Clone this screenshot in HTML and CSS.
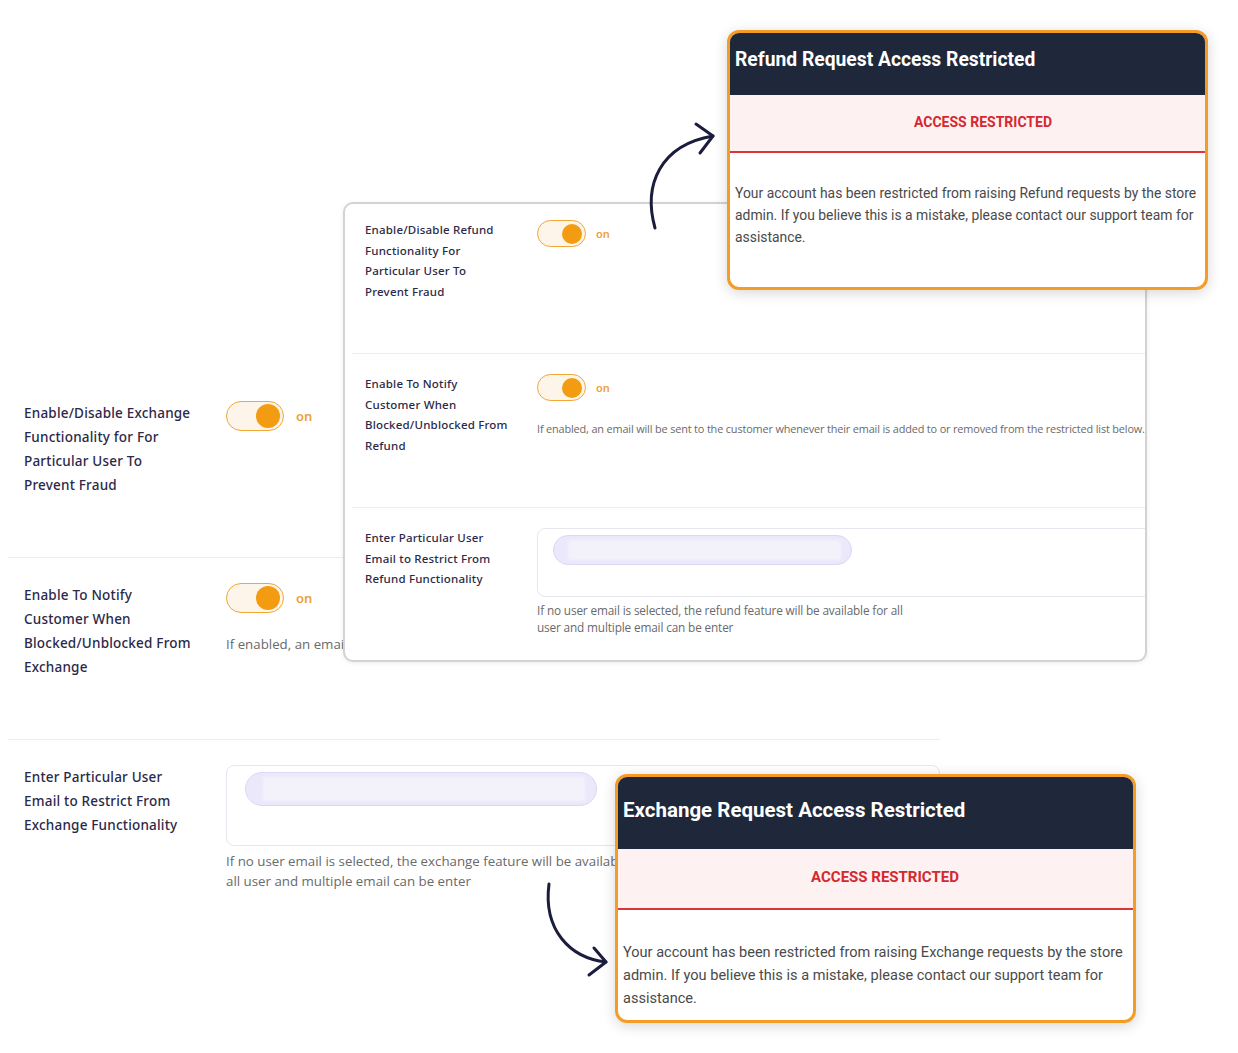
FILE: index.html
```html
<!DOCTYPE html>
<html lang="en">
<head>
<meta charset="utf-8">
<title>Restricted user settings</title>
<link rel="stylesheet" href="styles.css">
</head>
<body>
<div class="canvas">

  <!-- Exchange restriction settings -->
  <section class="settings settings--exchange">
    <div class="setting">
      <div class="setting__label">Enable/Disable Exchange<br>Functionality for For<br>Particular User To<br>Prevent Fraud</div>
      <div class="setting__control">
        <div class="switch-row">
          <span class="switch"><span class="switch__knob"></span></span>
          <span class="switch__state">on</span>
        </div>
      </div>
    </div>
    <div class="setting">
      <div class="setting__label">Enable To Notify<br>Customer When<br>Blocked/Unblocked From<br>Exchange</div>
      <div class="setting__control">
        <div class="switch-row">
          <span class="switch"><span class="switch__knob"></span></span>
          <span class="switch__state">on</span>
        </div>
        <p class="setting__hint setting__hint--single">If enabled, an email will be sent to the customer whenever their email is added to or removed from the restricted list below.</p>
      </div>
    </div>
    <div class="setting">
      <div class="setting__label">Enter Particular User<br>Email to Restrict From<br>Exchange Functionality</div>
      <div class="setting__control">
        <div class="email-box">
          <span class="email-chip"><span class="email-chip__text"></span></span>
        </div>
        <p class="setting__hint">If no user email is selected, the exchange feature will be available for<br>all user and multiple email can be enter</p>
      </div>
    </div>
  </section>

  <!-- Refund restriction settings -->
  <section class="settings settings--refund">
    <div class="setting">
      <div class="setting__label">Enable/Disable Refund<br>Functionality For<br>Particular User To<br>Prevent Fraud</div>
      <div class="setting__control">
        <div class="switch-row">
          <span class="switch"><span class="switch__knob"></span></span>
          <span class="switch__state">on</span>
        </div>
      </div>
    </div>
    <div class="setting">
      <div class="setting__label">Enable To Notify<br>Customer When<br>Blocked/Unblocked From<br>Refund</div>
      <div class="setting__control">
        <div class="switch-row">
          <span class="switch"><span class="switch__knob"></span></span>
          <span class="switch__state">on</span>
        </div>
        <p class="setting__hint setting__hint--single">If enabled, an email will be sent to the customer whenever their email is added to or removed from the restricted list below.</p>
      </div>
    </div>
    <div class="setting">
      <div class="setting__label">Enter Particular User<br>Email to Restrict From<br>Refund Functionality</div>
      <div class="setting__control">
        <div class="email-box">
          <span class="email-chip"><span class="email-chip__text"></span></span>
        </div>
        <p class="setting__hint">If no user email is selected, the refund feature will be available for all<br>user and multiple email can be enter</p>
      </div>
    </div>
  </section>

  <!-- Customer-facing notices -->
  <article class="notice notice--refund">
    <h2 class="notice__head">Refund Request Access Restricted</h2>
    <div class="notice__flag">ACCESS RESTRICTED</div>
    <p class="notice__body">Your account has been restricted from raising Refund requests by the store admin. If you believe this is a mistake, please contact our support team for assistance.</p>
  </article>

  <article class="notice notice--exchange">
    <h2 class="notice__head">Exchange Request Access Restricted</h2>
    <div class="notice__flag">ACCESS RESTRICTED</div>
    <p class="notice__body">Your account has been restricted from raising Exchange requests by the store admin. If you believe this is a mistake, please contact our support team for assistance.</p>
  </article>

  <!-- Hand-drawn pointers -->
  <svg class="pointer pointer--up" width="1238" height="1053" viewBox="0 0 1238 1053" aria-hidden="true">
    <path d="M655 228 C643 185 660 145 713 136"/>
    <path d="M696 124 L713 136 L700 153"/>
  </svg>
  <svg class="pointer pointer--down" width="1238" height="1053" viewBox="0 0 1238 1053" aria-hidden="true">
    <path d="M549 884 C543 930 570 958 606 962"/>
    <path d="M594 948 L606 962 L589 975"/>
  </svg>
</div>
</body>
</html>
```

FILE: styles.css
```css
* { box-sizing: border-box; }

body {
  margin: 0;
  background: #ffffff;
}

.canvas {
  position: relative;
  width: 1238px;
  height: 1053px;
  overflow: hidden;
  font-family: "Noto Sans", "Open Sans", sans-serif;
  color: #2c2948;
}

/* ---------- settings rows ---------- */
.settings p { margin: 0; }

.setting {
  display: flex;
  border-bottom: 1px solid #ebebf0;
}
.setting:last-child { border-bottom: 0; }

.setting__control {
  flex: 1;
  min-width: 0;
}

.switch-row {
  display: flex;
  align-items: center;
}

.switch {
  position: relative;
  display: flex;
  align-items: center;
  justify-content: flex-end;
  border: 1.5px solid #f2a633;
  background: #fdf5e9;
  border-radius: 999px;
}
.switch__knob {
  display: block;
  border-radius: 50%;
  background: #f39c12;
}
.switch__state {
  color: #eda134;
  font-weight: 600;
}

.setting__hint {
  color: #6a6a6a;
  font-family: "Open Sans", sans-serif;
}
.setting__hint--single { white-space: nowrap; }

.email-box {
  border: 1px solid #e6e6ee;
  border-radius: 8px;
  background: #fff;
}
.email-chip {
  display: block;
  background: #ece8fb;
  border: 1px solid #ddd6f6;
  border-radius: 999px;
}
.email-chip__text {
  display: block;
  height: 100%;
  background: #f3f1f9;
  filter: blur(1.5px);
}

/* exchange block: page-level flow */
.settings--exchange {
  width: 932px;
  margin: 0 0 0 8px;
  padding-top: 375px;
}
.settings--exchange .setting {
  padding: 25px 0 60px 16px;
}
.settings--exchange .setting:first-child { padding-top: 26px; }
.settings--exchange .setting__label {
  width: 202px;
  flex: none;
  font-size: 13.5px;
  line-height: 24px;
  font-weight: 500;
  letter-spacing: 0.2px;
}
.settings--exchange .switch {
  width: 58px;
  height: 30px;
  padding-right: 3px;
}
.settings--exchange .switch__knob { width: 24px; height: 24px; }
.settings--exchange .switch__state { margin-left: 12px; font-size: 13px; }
.settings--exchange .setting__hint { font-size: 13.3px; line-height: 20px; }
.settings--exchange .setting__hint--single { margin-top: 21px; }
.settings--exchange .email-box {
  height: 81px;
  padding: 6px 0 0 18px;
}
.settings--exchange .email-chip {
  width: 352px;
  height: 34px;
  padding: 4px 11px 4px 17px;
}
.settings--exchange .email-box + .setting__hint { margin-top: 5px; }

/* refund block: floating panel */
.settings--refund {
  position: absolute;
  left: 343px;
  top: 202px;
  width: 804px;
  height: 460px;
  padding-left: 7px;
  background: #fff;
  border: 2px solid #d3d3d3;
  border-radius: 10px;
  overflow: hidden;
  box-shadow: 0 1px 4px rgba(0, 0, 0, 0.08);
}
.settings--refund .setting {
  padding: 20px 0 51px 13px;
}
.settings--refund .setting:first-child { padding-top: 16px; }
.settings--refund .setting__label {
  width: 172px;
  flex: none;
  font-size: 11.5px;
  line-height: 20.5px;
  font-weight: 500;
  letter-spacing: 0.2px;
}
.settings--refund .switch {
  width: 49px;
  height: 27px;
  padding-right: 3px;
}
.settings--refund .switch__knob { width: 20px; height: 20px; }
.settings--refund .switch__state { margin-left: 10px; font-size: 11px; }
.settings--refund .setting__hint { font-size: 11.8px; line-height: 17px; letter-spacing: -0.15px; }
.settings--refund .setting__hint--single { margin-top: 19px; font-size: 10.9px; }
.settings--refund .email-box {
  width: 640px;
  height: 69px;
  padding: 6px 0 0 15px;
}
.settings--refund .email-chip {
  width: 299px;
  height: 30px;
  padding: 4px 10px 4px 14px;
}
.settings--refund .email-box + .setting__hint { margin-top: 5px; }

/* ---------- notice cards ---------- */
.notice {
  position: absolute;
  display: flex;
  flex-direction: column;
  background: #fff;
  border: 3px solid #f49c25;
  border-radius: 12px;
  overflow: hidden;
  font-family: Roboto, "Noto Sans", sans-serif;
  box-shadow: 0 3px 14px rgba(0, 0, 0, 0.16);
}
.notice__head {
  margin: 0;
  flex: none;
  background: #1e283a;
  color: #ffffff;
  font-weight: 700;
  padding-left: 5px;
  padding-right: 5px;
}
.notice__flag {
  flex: none;
  background: #fdf1f1;
  color: #d3292f;
  font-weight: 700;
  text-align: center;
  border-bottom: 2px solid #dc3535;
}
.notice__body {
  margin: 0;
  color: #4a4a4a;
  padding-left: 5px;
  padding-right: 0;
}

.notice--refund {
  left: 727px;
  top: 30px;
  width: 481px;
  height: 260px;
}
.notice--refund .notice__head {
  height: 62px;
  padding-top: 16px;
  font-size: 19.3px;
  line-height: 22px;
}
.notice--refund .notice__flag {
  height: 58px;
  padding-left: 31px;
  font-size: 14px;
  line-height: 54px;
}
.notice--refund .notice__body {
  padding-top: 29px;
  font-size: 13.9px;
  line-height: 22px;
}

.notice--exchange {
  left: 615px;
  top: 774px;
  width: 521px;
  height: 249px;
}
.notice--exchange .notice__head {
  height: 72px;
  padding-top: 21px;
  font-size: 20.5px;
  line-height: 24px;
}
.notice--exchange .notice__flag {
  height: 61px;
  padding-left: 19px;
  font-size: 15px;
  line-height: 57px;
}
.notice--exchange .notice__body {
  padding-top: 31px;
  font-size: 14.55px;
  line-height: 23px;
}

/* ---------- hand-drawn pointers ---------- */
.pointer {
  position: absolute;
  left: 0;
  top: 0;
  pointer-events: none;
  fill: none;
  stroke: #1b1d3c;
  stroke-width: 3;
  stroke-linecap: round;
  stroke-linejoin: round;
}
```
